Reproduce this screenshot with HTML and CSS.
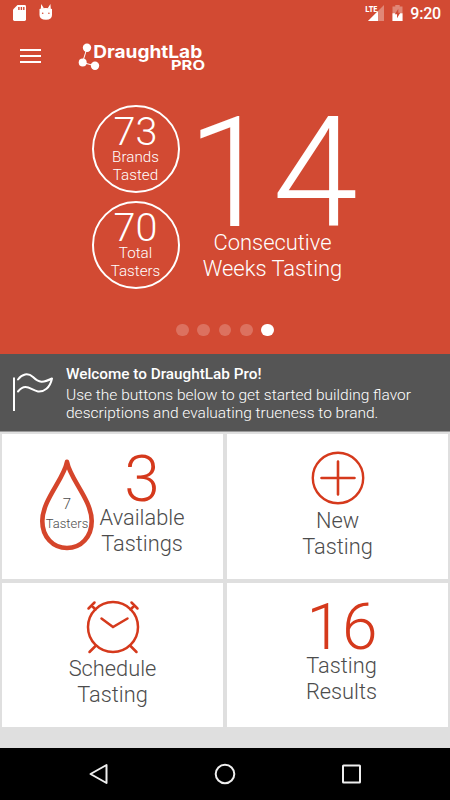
FILE: index.html
```
<!DOCTYPE html>
<html lang="en">
<head>
<meta charset="UTF-8">
<title>DraughtLab Pro</title>
<link rel="stylesheet" href="styles.css">
</head>
<body>
<div class="hero">
    <div class="status">
        <svg class="sd" width="40" height="28" viewBox="0 0 40 28">
            <path fill="#fff" d="M17.500 5H24.600Q26 5 26 6.400V19.600Q26 21 24.600 21H14.400Q13 21 13 19.600V9.500Z"/>
            <path stroke="#d24a33" stroke-width="1.400" d="M18.900 7v3M21.400 7v3M23.800 7v3"/>
        </svg>
        <svg width="14" height="28" viewBox="0 0 14 28">
            <path fill="#fff" d="M.5 9Q6.700 7 13 9V15Q13 19.800 7 19.800Q.5 19.800.5 15Z"/>
            <path fill="#fff" d="M1.800 9L2.200 4L5 8.500ZM11.800 9L11.400 4L8.600 8.500Z"/>
            <circle cx="3.700" cy="13.200" r=".8" fill="#d24a33"/>
            <circle cx="9.900" cy="13.200" r=".8" fill="#d24a33"/>
        </svg>
        <span class="lte">LTE</span>
        <svg class="signal" width="16" height="16" viewBox="0 0 16 16">
            <path fill="#e08777" d="M0 16L16 0V16Z"/>
            <path fill="#fff" d="M0 16L10 6V16Z"/>
        </svg>
        <svg class="battery" width="11" height="16" viewBox="0 0 11 16">
            <path fill="#e08777" d="M3.300 0H7.700V1.600H10.500V16H.5V1.600H3.300Z"/>
            <path fill="#fff" d="M.5 8.300H10.500V16H.5Z"/>
            <path fill="#d24a33" d="M6.300 3.800L2.800 9.300H5V13.200L8.300 7.700H6.300Z"/>
        </svg>
        <span class="time">9:20</span>
    </div>
    <div class="bar">
        <div class="menu"><i></i><i></i><i></i></div>
        <svg class="logo" width="130" height="36" viewBox="78 39 130 36">
            <path fill="none" stroke="#fff" stroke-width="1" d="M87 48L82.500 62.500L95 65.800"/>
            <g fill="#fff">
                <circle cx="87" cy="47.800" r="4.200"/>
                <circle cx="82.700" cy="62.500" r="4"/>
                <circle cx="95" cy="65.800" r="4.200"/>
                <text class="name" x="93.200" y="58" textLength="109" lengthAdjust="spacingAndGlyphs">DraughtLab</text>
                <text class="pro" x="171" y="69.700" textLength="34" lengthAdjust="spacingAndGlyphs">PRO</text>
            </g>
        </svg>
    </div>
    <div class="stats">
        <div class="circles">
            <div class="circle"><b>73</b><p>Brands<br>Tasted</p></div>
            <div class="circle"><b>70</b><p>Total<br>Tasters</p></div>
        </div>
        <div class="weeks"><b>14</b><p>Consecutive<br>Weeks Tasting</p></div>
    </div>
    <div class="dots"><i></i><i></i><i></i><i></i><i class="on"></i></div>
</div>

<div class="welcome">
    <svg width="66" height="77" viewBox="0 354 66 77">
        <g fill="none" stroke="#fff" stroke-width="2" stroke-linecap="round" stroke-linejoin="round">
            <path stroke-linecap="butt" d="M14 377.500V411"/>
            <path d="M18 379.500C22 374 28 372.500 33 377C39 383 43 383 52 378.500C50 388 44 392 38 391.500C31 390.500 26 382 18 391.500"/>
        </g>
    </svg>
    <div class="msg">
        <h1>Welcome to DraughtLab Pro!</h1>
        <p>Use the buttons below to get started building flavor<br>descriptions and evaluating trueness to brand.</p>
    </div>
</div>

<div class="tiles">
    <div class="tile row">
        <div class="drop">
            <svg width="54" height="92" viewBox="0 0 54 92">
                <path fill="none" stroke="#d5452b" stroke-width="4.600" stroke-linejoin="round" d="M27 2.800C24 20 2.300 41 2.300 62C2.300 78 13 89 27 89C41 89 51.700 78 51.700 62C51.700 41 30 20 27 2.800Z"/>
            </svg>
            <p><span>7</span>Tasters</p>
        </div>
        <div class="avail"><b>3</b><p>Available<br>Tastings</p></div>
    </div>
    <div class="tile">
        <svg class="plus" width="54" height="54" viewBox="0 0 54 54">
            <circle cx="27" cy="27" r="25.200" fill="none" stroke="#d5391c" stroke-width="2.400"/>
            <path stroke="#d5391c" stroke-width="2.600" stroke-linecap="round" d="M10.500 27H43.500M27 10.500V43.500"/>
        </svg>
        <p>New<br>Tasting</p>
    </div>
    <div class="tile">
        <svg class="clock" width="54" height="54" viewBox="0 0 54 54">
            <g fill="none" stroke="#d5391c" stroke-width="2.500" stroke-linecap="round">
                <circle cx="27" cy="27" r="25"/>
                <path d="M15.500 18.500L27 27L41.500 18.500M9.500 46L3.500 52M44.500 46L50.500 52"/>
                <path d="M2.500 8.500L8.500 2.500M5.500 5.500L9.500 9.500M45.500 2.500L51.500 8.500M48.500 5.500L44.500 9.500"/>
            </g>
        </svg>
        <p>Schedule<br>Tasting</p>
    </div>
    <div class="tile results"><b>16</b><p>Tasting<br>Results</p></div>
</div>

<div class="nav">
    <svg width="20" height="22" viewBox="0 0 20 22"><path d="M2.500 11L18.500 2V20Z"/></svg>
    <svg width="22" height="22" viewBox="0 0 22 22"><circle cx="11" cy="11" r="9.300"/></svg>
    <svg width="20" height="22" viewBox="0 0 20 22"><rect x="1" y="2.500" width="17" height="17" rx=".5"/></svg>
</div>
</body>
</html>
```
FILE: styles.css
```
html,body{height:100%;overflow:hidden;}
body,h1,p{margin:0;padding:0;}
body{display:flex;flex-direction:column;background:#dfdfdf;font-family:Roboto,"Liberation Sans",sans-serif;font-weight:300;}
b{display:block;font-weight:300;}
svg{display:block;flex:none;}

.hero{height:354px;background:#d24a33;color:#fff;}
.status{display:flex;height:28px;}
.sd{margin-right:-1px;}
.lte{margin:5px 0 0 auto;font:700 8px/8px "Open Sans",sans-serif;letter-spacing:-.6px;}
.signal{margin:5px 8.500px 0 -9px;}
.battery{margin:5px 7px 0 0;}
.time{padding-right:9px;font-size:16px;font-weight:500;line-height:28px;letter-spacing:-.2px;}

.bar{display:flex;height:56px;}
.menu{display:flex;flex-direction:column;gap:4px;padding:21px 37px 0 20px;}
.menu i{width:21px;height:2px;background:#fff;}
.logo{margin-top:11px;overflow:visible;}
.name{font:700 18px Inter,sans-serif;}
.pro{font:700 13.500px Inter,sans-serif;}

.stats{display:flex;padding:21px 0 0 91.500px;text-align:center;}
.circles{display:flex;flex-direction:column;gap:8px;}
.circle{box-sizing:border-box;width:88px;height:88px;padding-top:8px;border:2px solid #fff;border-radius:50%;}
.circle b{font-size:39.500px;line-height:33px;}
.circle p{font-size:15.200px;line-height:18px;}
.weeks{width:174px;padding-top:12px;margin-left:6px;}
.weeks b{font-size:154px;line-height:113px;}
.weeks p{font-size:21.900px;line-height:26px;}
.dots{display:flex;justify-content:center;gap:8.500px;margin-top:34.500px;}
.dots i{width:12.800px;height:12.800px;border-radius:50%;background:rgba(255,255,255,.22);}
.dots .on{background:#fff;}

.welcome{display:flex;height:77px;background:#555;border-bottom:1px solid #999;color:#fff;}
.msg h1{padding-top:10px;font-size:15.300px;font-weight:500;line-height:20px;}
.msg p{padding-top:1.500px;font-size:15.500px;line-height:18px;white-space:nowrap;}

.tiles{display:grid;grid-template-columns:1fr 1fr;grid-auto-rows:144.500px;gap:4px;padding:2px 2px 0;}
.tile{background:#fff;color:#4c4c4c;text-align:center;font-size:21.800px;line-height:26px;}
.tile b{color:#d5391c;font-size:64px;}
.row{display:flex;}
.drop{display:grid;margin:25px 0 0 38px;width:54px;}
.drop svg,.drop p{grid-area:1/1;}
.drop p{padding-top:35px;font-size:13px;line-height:19px;margin:0 -4px;}
.drop span{display:block;font-size:15px;line-height:20px;}
.avail{width:90px;margin-left:3px;padding-top:21px;}
.avail b{line-height:50px;}
.plus{margin:17px auto 2.500px;}
.clock{margin:17.500px auto 2px;}
.results b{padding:19px 0 0 9px;line-height:51px;}
.results p{padding-left:8px;}

.nav{display:flex;justify-content:space-between;align-items:center;height:52px;margin-top:auto;padding:0 88px;background:#000;}
.nav svg{fill:none;stroke:#eee;stroke-width:2;stroke-linejoin:round;}
```
